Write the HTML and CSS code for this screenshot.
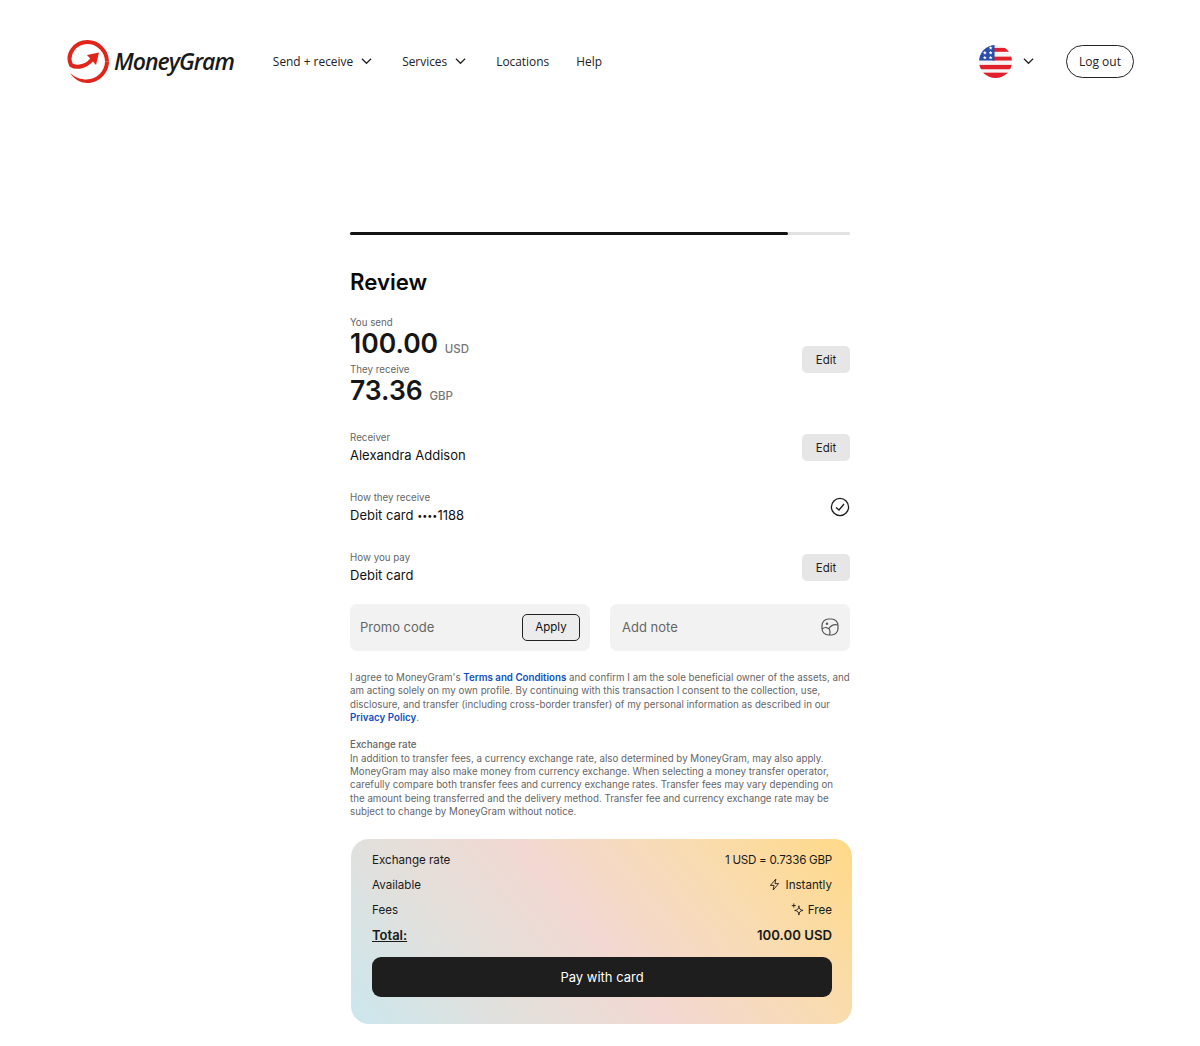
FILE: index.html
```html
<!DOCTYPE html>
<html lang="en">

<head>
    <meta charset="UTF-8">
    <meta name="viewport" content="width=device-width, initial-scale=1.0">
    <title>MoneyGram - Review</title>
    <link rel="stylesheet" href="styles.css">
</head>

<body>
    <!-- Header -->
    <header class="header">
        <a class="logo" href="#">
            <svg class="logo-mark" viewBox="0 0 43 43" width="43" height="43">
                <path class="logo-spiral" d="M27 18 C22 26 11 29 5 25 C0 14 9 2 21.5 2 C32 2 41 11 41 21.5"/>
                <path class="logo-fill" d="M43 21.5 C43 33 33 43 21.5 43 C14 43 7 38 4 33 C9 37.5 15 39.5 20.5 39.5 C31 39.5 39 31 39 21.5 Z"/>
                <polygon class="logo-fill" points="21,15 33,12.5 30,25"/>
            </svg>
            <span class="logo-text">MoneyGram</span>
        </a>
        <nav class="nav">
            <a class="nav-link" href="#">Send + receive
                <svg class="chevron" viewBox="0 0 12 8" width="11" height="8"><path d="M1 1.5 L6 6.5 L11 1.5"/></svg>
            </a>
            <a class="nav-link" href="#">Services
                <svg class="chevron" viewBox="0 0 12 8" width="11" height="8"><path d="M1 1.5 L6 6.5 L11 1.5"/></svg>
            </a>
            <a class="nav-link" href="#">Locations</a>
            <a class="nav-link nav-help" href="#">Help</a>
        </nav>
        <div class="header-right">
            <div class="lang">
                <svg class="flag" viewBox="0 0 34 34" width="33" height="33">
                    <defs>
                        <clipPath id="flagClip"><circle cx="17" cy="17" r="17"/></clipPath>
                        <path id="star" d="M0 -2 L0.6 -0.7 L2 -0.6 L0.9 0.3 L1.2 1.7 L0 1 L-1.2 1.7 L-0.9 0.3 L-2 -0.6 L-0.6 -0.7 Z"/>
                    </defs>
                    <g clip-path="url(#flagClip)">
                        <rect width="34" height="34" fill="#f4f4f4"/>
                        <rect x="14" y="3" width="20" height="4" fill="#e2202c"/>
                        <rect x="14" y="12" width="20" height="4" fill="#e2202c"/>
                        <rect y="20.5" width="34" height="4.5" fill="#e2202c"/>
                        <rect y="28.5" width="34" height="5.5" fill="#e2202c"/>
                        <rect width="16" height="16" fill="#2a4fa8"/>
                        <g fill="#fff">
                            <use href="#star" x="6" y="13"/><use href="#star" x="12" y="13"/>
                            <use href="#star" x="6" y="8"/><use href="#star" x="12" y="8"/>
                            <use href="#star" x="12" y="3"/>
                        </g>
                    </g>
                </svg>
                <svg class="chevron" viewBox="0 0 12 8" width="11" height="8"><path d="M1 1.5 L6 6.5 L11 1.5"/></svg>
            </div>
            <button class="logout">Log out</button>
        </div>
    </header>

    <main class="review">
        <div class="progress"><div class="progress-fill"></div></div>

        <h1>Review</h1>

        <!-- Amounts -->
        <section class="row row-amounts">
            <div>
                <p class="label">You send</p>
                <p class="amount">100.00 <span class="currency">USD</span></p>
                <p class="label label-second">They receive</p>
                <p class="amount">73.36 <span class="currency">GBP</span></p>
            </div>
            <button class="edit edit-amounts">Edit</button>
        </section>

        <section class="row row-receiver">
            <div>
                <p class="label">Receiver</p>
                <p class="value">Alexandra Addison</p>
            </div>
            <button class="edit">Edit</button>
        </section>

        <section class="row row-method">
            <div>
                <p class="label">How they receive</p>
                <p class="value">Debit card <span class="dots">••••</span>1188</p>
            </div>
            <svg class="check" viewBox="0 0 20 20" width="20" height="20">
                <circle cx="10" cy="10" r="8.6"/>
                <path d="M6 10.4 L9 13 L14 7"/>
            </svg>
        </section>

        <section class="row row-method">
            <div>
                <p class="label">How you pay</p>
                <p class="value">Debit card</p>
            </div>
            <button class="edit">Edit</button>
        </section>

        <!-- Promo and note -->
        <div class="fields">
            <div class="field field-promo">
                <span>Promo code</span>
                <button class="apply">Apply</button>
            </div>
            <div class="field field-note">
                <span>Add note</span>
                <svg class="note-icon" viewBox="0 0 18 18" width="18" height="18">
                    <rect x="1" y="1" width="16" height="16" rx="6.5"/>
                    <path d="M1.2 11 C4 8.5 7 9.5 8.5 11.5 C9.3 13 9 15.5 8.5 17 M8 10.5 C10 7.5 13 6 16.8 7"/>
                    <circle cx="6" cy="5.8" r="1.2" class="note-dot"/>
                </svg>
            </div>
        </div>

        <!-- Legal text -->
        <div class="legal">
            <p>I agree to MoneyGram's <a href="#">Terms and Conditions</a> and confirm I am the sole beneficial owner of the assets, and am acting solely on my own profile. By continuing with this transaction I consent to the collection, use, disclosure, and transfer (including cross-border transfer) of my personal information as described in our <a href="#">Privacy Policy</a>.</p>
            <p class="legal-title">Exchange rate</p>
            <p>In addition to transfer fees, a currency exchange rate, also determined by MoneyGram, may also apply. MoneyGram may also make money from currency exchange. When selecting a money transfer operator, carefully compare both transfer fees and currency exchange rates. Transfer fees may vary depending on the amount being transferred and the delivery method. Transfer fee and currency exchange rate may be subject to change by MoneyGram without notice.</p>
        </div>

        <!-- Summary -->
        <div class="summary">
            <div class="summary-row"><span>Exchange rate</span><span class="rate">1 USD = 0.7336 GBP</span></div>
            <div class="summary-row">
                <span>Available</span>
                <span class="with-icon">
                    <svg class="small-icon bolt" viewBox="0 0 12 14" width="11" height="13"><path d="M7.5 1 L1.5 8 H5.5 L4.5 13 L10.5 6 H6.5 Z"/></svg>
                    Instantly
                </span>
            </div>
            <div class="summary-row">
                <span>Fees</span>
                <span class="with-icon">
                    <svg class="small-icon" viewBox="0 0 14 14" width="13" height="13">
                        <path d="M8.5 3 C8.8 6.5 9.7 7.4 13 8 C9.7 8.6 8.8 9.5 8.5 13 C8.2 9.5 7.3 8.6 4 8 C7.3 7.4 8.2 6.5 8.5 3 Z"/>
                        <path d="M3 0.5 V5 M0.8 2.8 H5.2"/>
                    </svg>
                    Free
                </span>
            </div>
            <div class="summary-row summary-total"><span class="total-label">Total:</span><span class="total-value">100.00 USD</span></div>
            <button class="pay">Pay with card</button>
        </div>
    </main>
</body>

</html>
```

FILE: styles.css
```css
* {
    margin: 0;
    padding: 0;
    box-sizing: border-box;
}

body {
    background: #fff;
    color: #111;
    font-family: 'Inter', sans-serif;
}

button {
    font-family: inherit;
    cursor: pointer;
}

a {
    text-decoration: none;
    color: inherit;
}

.header {
    display: flex;
    align-items: center;
    height: 122px;
    padding: 0 66px;
}

.logo {
    display: flex;
    align-items: center;
    gap: 5px;
    margin-right: 39px;
}

.logo-spiral {
    fill: none;
    stroke: #e0251b;
    stroke-width: 4;
}

.logo-fill {
    fill: #e0251b;
}

.logo-text {
    font-family: 'Open Sans', sans-serif;
    font-style: italic;
    font-weight: 600;
    font-size: 23px;
    letter-spacing: -1px;
    color: #1a1a1a;
}

.nav {
    display: flex;
    align-items: center;
    gap: 30px;
    font-family: 'Open Sans', sans-serif;
    font-size: 11.9px;
    color: #222;
}

.nav-link {
    display: flex;
    align-items: center;
    gap: 8px;
}

.nav-help {
    margin-left: -3px;
}

.chevron {
    fill: none;
    stroke: #222;
    stroke-width: 1.3;
}

.header-right {
    display: flex;
    align-items: center;
    gap: 32px;
    margin-left: auto;
}

.lang {
    display: flex;
    align-items: center;
    gap: 11px;
}

.logout {
    width: 68px;
    height: 33px;
    background: #fff;
    border: 1px solid #222;
    border-radius: 17px;
    font-family: 'Open Sans', sans-serif;
    font-size: 12px;
    color: #222;
}

.review {
    width: 500px;
    margin: 110px auto 22px;
}

.progress {
    height: 3px;
    background: #e2e2e2;
    border-radius: 2px;
}

.progress-fill {
    width: 438px;
    height: 3px;
    background: #141414;
    border-radius: 2px;
}

h1 {
    margin-top: 33px;
    font-size: 22.2px;
    line-height: 28px;
    font-weight: 600;
    color: #0a0a0a;
}

.row {
    display: flex;
    justify-content: space-between;
    align-items: flex-start;
}

.row-amounts {
    align-items: center;
    margin-top: 20px;
}

.row-receiver {
    margin-top: 27px;
}

.row-method {
    margin-top: 27px;
}

.label {
    font-size: 9.75px;
    line-height: 14px;
    color: #666;
}

.label-second {
    margin-top: 6px;
}

.amount {
    font-size: 26.5px;
    line-height: 27px;
    font-weight: 600;
    color: #161616;
}

.currency {
    font-size: 11.5px;
    line-height: 1;
    font-weight: 500;
    color: #777;
}

.value {
    margin-top: 1px;
    font-size: 13px;
    line-height: 18px;
    color: #111;
}

.dots {
    font-size: 9px;
    line-height: 1;
    vertical-align: 1px;
}

.edit {
    width: 48px;
    height: 27px;
    margin-top: 3px;
    background: #e6e6e6;
    border: none;
    border-radius: 5px;
    font-size: 11.5px;
    color: #222;
}

.edit-amounts {
    margin-top: 0;
    margin-bottom: 1px;
}

.check {
    margin-top: 6px;
    fill: none;
    stroke: #1a1a1a;
    stroke-width: 1.3;
}

.fields {
    display: grid;
    grid-template-columns: 1fr 1fr;
    gap: 20px;
    margin-top: 20px;
}

.field {
    display: flex;
    align-items: center;
    justify-content: space-between;
    height: 47px;
    background: #f2f2f2;
    border-radius: 7px;
    font-size: 13px;
    color: #666;
}

.field-promo {
    padding: 0 10px 1px;
}

.field-note {
    padding: 0 11px 1px 12px;
}

.apply {
    width: 58px;
    height: 27px;
    background: #ececec;
    border: 1px solid #222;
    border-radius: 5px;
    font-size: 11.5px;
    color: #111;
}

.note-icon {
    fill: none;
    stroke: #555;
    stroke-width: 1.2;
}

.note-dot {
    fill: #555;
    stroke: none;
}

.legal {
    margin-top: 20px;
    font-size: 9.75px;
    line-height: 13.35px;
    color: #666;
}

.legal a {
    color: #0f4fbd;
    font-weight: 600;
}

.legal-title {
    margin-top: 14px;
    font-weight: 500;
}

.summary {
    width: 501px;
    margin: 21px 0 0 1px;
    padding: 8px 20px 27px 21px;
    border-radius: 18px;
    background: linear-gradient(50deg, #cbe7ee 0%, #e2e0dc 25%, #f3d8d1 50%, #f9dcb0 75%, #ffd987 100%);
    font-size: 11.6px;
    color: #1a1a1a;
}

.summary-row {
    display: flex;
    justify-content: space-between;
    align-items: center;
    height: 25px;
}

.rate {
    letter-spacing: -0.25px;
}

.with-icon {
    display: flex;
    align-items: center;
    gap: 4px;
}

.small-icon {
    fill: none;
    stroke: #222;
    stroke-width: 1;
}

.bolt {
    margin-right: 2px;
}

.summary-total {
    font-size: 13px;
    font-weight: 600;
}

.total-value {
    font-size: 13.2px;
}

.total-label {
    text-decoration: underline;
}

.pay {
    display: block;
    width: 100%;
    height: 40px;
    margin-top: 10px;
    background: #1e1e1e;
    border: none;
    border-radius: 9px;
    color: #fff;
    font-size: 13px;
}
```
